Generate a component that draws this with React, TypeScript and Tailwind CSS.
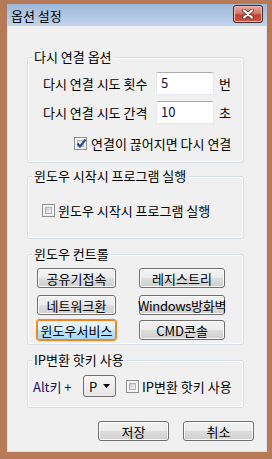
import React from 'react';

const btn =
  'h-[20px] whitespace-nowrap rounded-[3px] border border-[#707070] bg-[linear-gradient(#f2f2f2_0%,#ebebeb_50%,#dddddd_50%,#cfcfcf_100%)] shadow-[inset_0_0_0_1px_#fbfbfb] text-[13px] leading-none text-black flex items-center justify-center';

const hotBtn =
  'h-[20px] whitespace-nowrap rounded-[2px] border border-[#f5841f] outline outline-[1px] outline-[#f5841f] bg-[linear-gradient(#eaf6fd_0%,#d9f0fc_50%,#bee6fd_50%,#a7d9f5_100%)] text-[13px] leading-none text-black flex items-center justify-center';

function Group({
  title,
  className = '',
  children,
}: {
  title: string;
  className?: string;
  children: React.ReactNode;
}) {
  return (
    <fieldset
      className={`w-[217px] rounded-[3px] border border-[#d5dfe5] shadow-[inset_0_0_0_1px_#ffffff] ${className}`}
    >
      <legend className="ml-[4px] px-[2px] bg-[#f0f0f0] text-[13px] leading-[16px]">{title}</legend>
      {children}
    </fieldset>
  );
}

function Check({ checked = false }: { checked?: boolean }) {
  return (
    <span className="relative block w-[13px] h-[13px] shrink-0 border border-[#8e8f8f] bg-[#f4f4f4] p-[2px]">
      <span
        className={`block w-full h-full border border-[#aeb3b9] ${
          checked
            ? 'bg-[linear-gradient(135deg,#e0e3e7,#fbfbfb)]'
            : 'bg-[linear-gradient(135deg,#c9cdd3,#f6f6f6)]'
        }`}
      />
      {checked && (
        <svg className="absolute left-[0px] top-[-1px]" width="13" height="13" viewBox="0 0 13 13">
          <path d="M2.5 6.5 L5 9.5 L10.5 2.5" fill="none" stroke="#324f87" strokeWidth="2.2" />
        </svg>
      )}
    </span>
  );
}

function NumInput({ value }: { value: string }) {
  return (
    <div className="ml-[9px] w-[58px] h-[23px] rounded-[2px] border border-[#e3e9ef] border-t-[#abadb3] bg-white pl-[4px] pt-[3px] text-[13px] leading-none text-[#10104a]">
      {value}
    </div>
  );
}

export default function App() {
  return (
    <div className="w-[272px] h-[459px] bg-[#b87a56] pt-[4px] pl-[7px] pr-[5px] pb-[7px] font-['Noto_Sans_CJK_KR',sans-serif] text-[13px] leading-none text-black">
      <div className="h-full flex flex-col">
        <div className="h-[22px] shrink-0 flex items-start justify-between pl-[4px] pr-[4px] bg-[linear-gradient(#9db8da,#c0d4ec)]">
          <span className="self-center text-[13px]">옵션 설정</span>
          <button
            type="button"
            className="mt-[1px] w-[30px] h-[18px] rounded-[3px] border border-[#4b2424] bg-[linear-gradient(#e8a899_0%,#d77a6c_45%,#c54432_55%,#c9533f_100%)] shadow-[inset_0_0_0_1px_#eebcb2] flex items-center justify-center"
            aria-label="닫기"
          >
            <svg width="14" height="10" viewBox="0 0 14 10">
              <path d="M3 1.5 L11 8.5 M11 1.5 L3 8.5" stroke="#5a3a3a" strokeWidth="4" strokeLinecap="round" />
              <path d="M3 1.5 L11 8.5 M11 1.5 L3 8.5" stroke="#ffffff" strokeWidth="2.2" strokeLinecap="round" />
            </svg>
          </button>
        </div>

        <div className="flex-1 flex flex-col bg-[#f0f0f0] border-x border-b border-[#d9e4f1] pl-[19px] pt-[23px]">
          <Group title="다시 연결 옵션" className="pb-[11px]">
            <div className="mt-[7px] h-[23px] flex items-center pl-[15px]">
              <span className="w-[104px] whitespace-nowrap">다시 연결 시도 횟수</span>
              <NumInput value="5" />
              <span className="ml-[5px]">번</span>
            </div>
            <div className="mt-[6px] h-[23px] flex items-center pl-[15px]">
              <span className="w-[104px] whitespace-nowrap">다시 연결 시도 간격</span>
              <NumInput value="10" />
              <span className="ml-[5px]">초</span>
            </div>
            <div className="mt-[11px] h-[16px] flex items-center gap-[4px] pl-[46px]">
              <Check checked />
              <span className="whitespace-nowrap">연결이 끊어지면 다시 연결</span>
            </div>
          </Group>

          <Group title="윈도우 시작시 프로그램 실행" className="mt-[5px] pb-[20px]">
            <div className="mt-[18px] h-[16px] flex items-center gap-[3px] pl-[14px]">
              <Check />
              <span className="whitespace-nowrap">윈도우 시작시 프로그램 실행</span>
            </div>
          </Group>

          <Group title="윈도우 컨트롤" className="mt-[7px] pb-[4px]">
            <div className="mt-[6px] pl-[9px] grid grid-cols-[79px_86px] gap-x-[23px]">
              <button type="button" className={btn}>공유기접속</button>
              <button type="button" className={btn}>레지스트리</button>
              <button type="button" className={`${btn} mt-[7px]`}>네트워크환</button>
              <button type="button" className={`${btn} mt-[7px] text-[12px] tracking-[-0.3px]`}>Windows방화벽</button>
              <button type="button" className={`${hotBtn} mt-[5px]`}>윈도우서비스</button>
              <button type="button" className={`${btn} mt-[5px]`}>CMD콘솔</button>
            </div>
          </Group>

          <Group title="IP변환 핫키 사용" className="mt-[7px] pb-[10px]">
            <div className="mt-[7px] h-[22px] flex items-center pl-[5px]">
              <span className="w-[50px] text-[#14145a]">Alt키 +</span>
              <div className="w-[33px] h-[22px] rounded-[3px] border border-[#707070] bg-[linear-gradient(#f6f6f6,#e6e6e6)] flex items-center justify-between pl-[5px] pr-[5px]">
                <span>P</span>
                <svg width="7" height="4" viewBox="0 0 7 4">
                  <path d="M0 0 H7 L3.5 4 Z" fill="#000" />
                </svg>
              </div>
              <div className="ml-[10px] flex items-center gap-[3px]">
                <Check />
                <span className="whitespace-nowrap">IP변환 핫키 사용</span>
              </div>
            </div>
          </Group>

          <div className="mt-[13px] flex justify-end gap-[14px] pr-[12px]">
            <button type="button" className={`${btn} w-[71px]`}>저장</button>
            <button type="button" className={`${btn} w-[71px]`}>취소</button>
          </div>
        </div>
      </div>
    </div>
  );
}
